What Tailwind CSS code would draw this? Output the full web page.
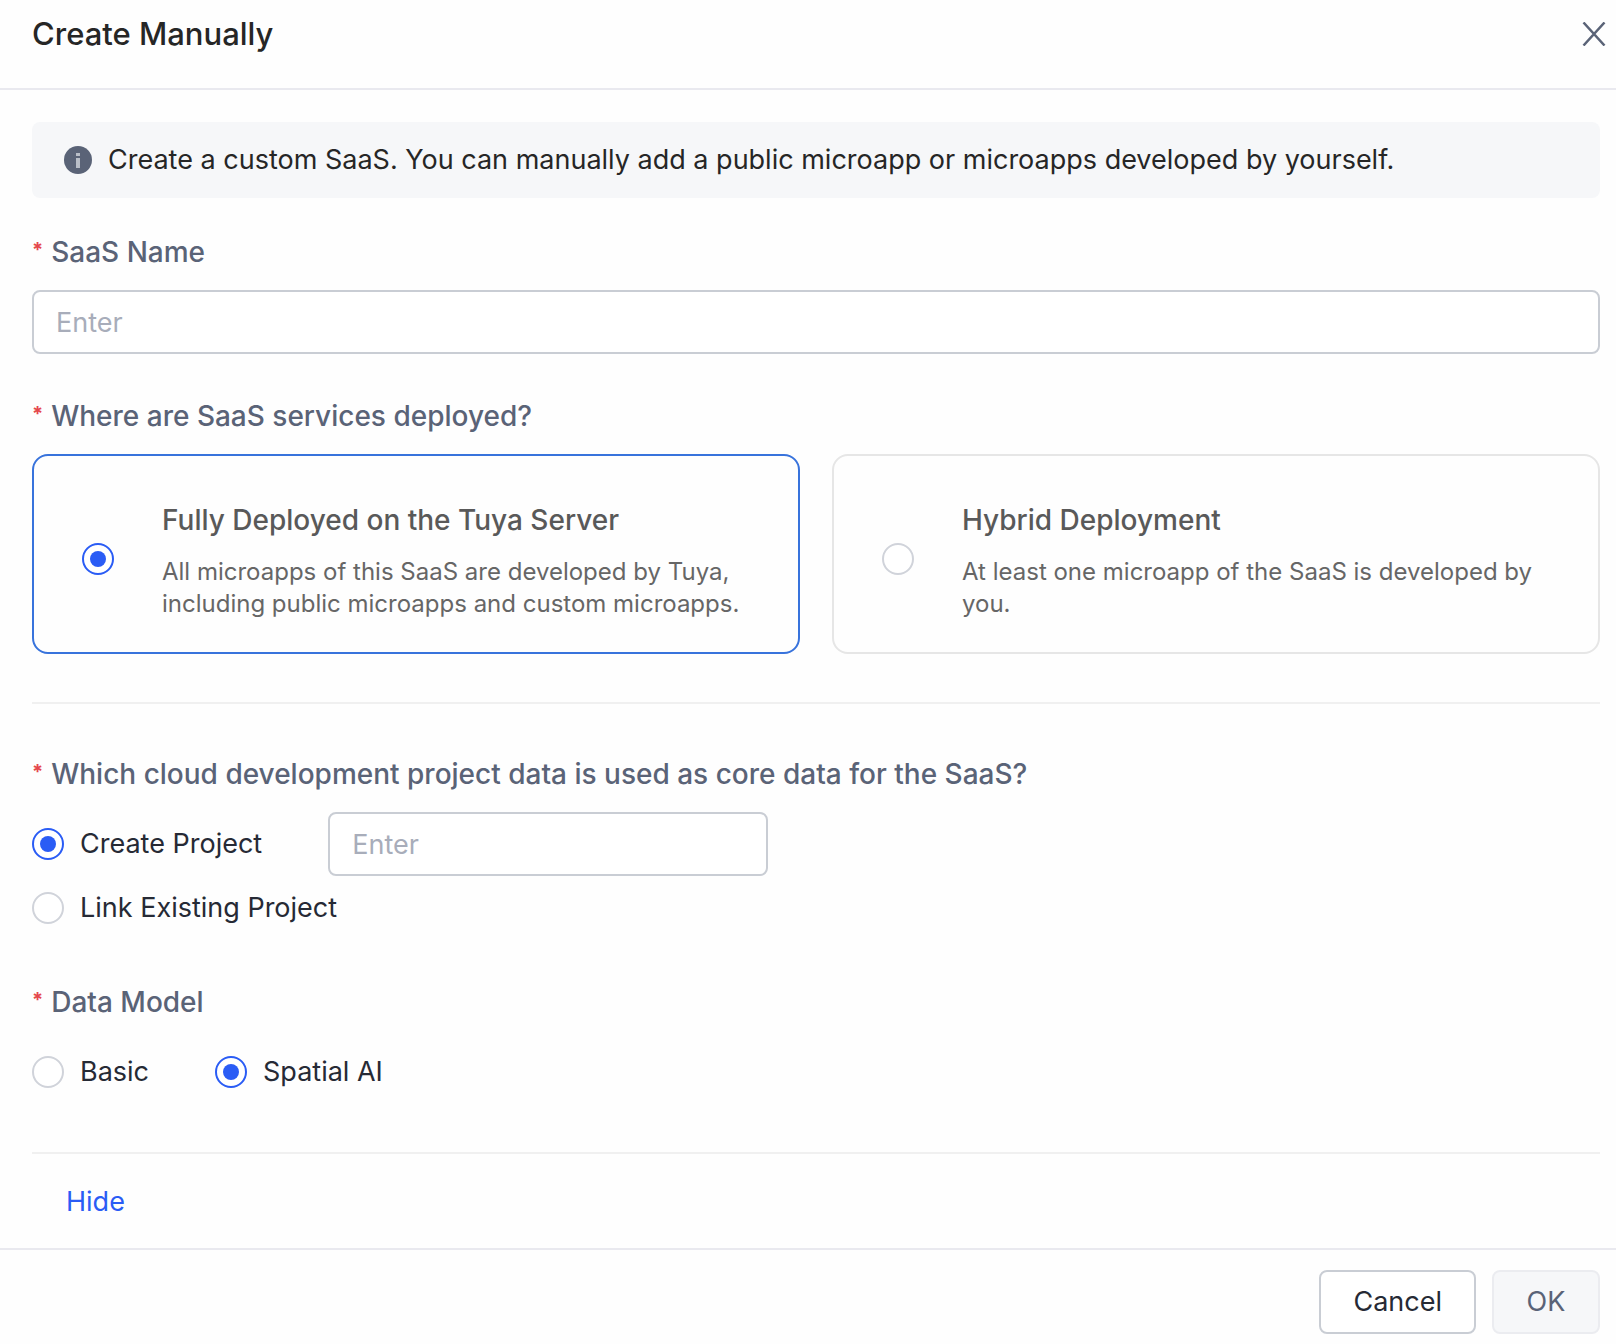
<!DOCTYPE html>
<html lang="en">
<head>
  <meta charset="UTF-8" />
  <meta name="viewport" content="width=device-width, initial-scale=1.0" />
  <title>Create Manually</title>
  <script src="https://cdn.jsdelivr.net/npm/@tailwindcss/browser@4"></script>
</head>
<body class="bg-[#fefefe] text-[#262a35] font-['Inter','Liberation_Sans',sans-serif] text-[27px] leading-[44px]">

  <form class="min-h-screen flex flex-col" onsubmit="return false">
    <!-- Header -->
    <header class="flex items-center justify-between pl-8 pr-2 pt-3 pb-8 border-b-2 border-[#e9e9ef]">
      <h1 class="text-[31px] font-medium text-[#262626]">Create Manually</h1>
      <button type="button" aria-label="Close" class="size-7 flex items-center justify-center text-[#5a6377]">
        <svg class="size-6" viewBox="0 0 24 24" fill="none" stroke="currentColor" stroke-width="2.5">
          <path d="M1.5 0.5L22.5 23.5M22.5 0.5L1.5 23.5" />
        </svg>
      </button>
    </header>

    <main class="pl-8 pr-4 pt-8">
      <!-- Info banner -->
      <div class="flex items-center gap-4 rounded-lg bg-[#f6f7f9] px-8 py-4 text-[#262626]">
        <svg class="size-7 shrink-0" viewBox="0 0 28 28" fill="none">
          <circle cx="14" cy="14" r="14" fill="#5a6377" />
          <rect x="12" y="7" width="4" height="3" fill="#b9bec8" />
          <rect x="12" y="12" width="4" height="10" fill="#b9bec8" />
        </svg>
        <p>Create a custom SaaS. You can manually add a public microapp or microapps developed by yourself.</p>
      </div>

      <!-- SaaS name -->
      <div class="mt-8">
        <label for="saasName" class="flex gap-2 text-[28px] font-medium text-[#5a6377]">
          <span class="text-[20px] leading-10 font-bold text-[#e5484d]">*</span>SaaS Name
        </label>
        <input id="saasName" type="text" placeholder="Enter" class="mt-4 block h-16 w-full rounded-lg border-2 border-[#c9cdd4] bg-white px-[22px] placeholder:text-[#a8adba]" />
      </div>

      <!-- Deployment -->
      <fieldset class="mt-10">
        <legend class="flex gap-2 text-[28px] font-medium text-[#5a6377]">
          <span class="text-[20px] leading-10 font-bold text-[#e5484d]">*</span>Where are SaaS services deployed?
        </legend>
        <div class="mt-4 grid grid-cols-2 gap-8">
          <label class="flex items-center gap-12 rounded-2xl border-2 border-[#e6e6e6] has-checked:border-[#3873dc] px-12 pt-[42px] pb-8">
            <input type="radio" name="deploy" checked class="appearance-none size-8 shrink-0 rounded-full border-2 border-[#d0d3da] bg-white flex items-center justify-center checked:border-[#2a5cf5] checked:before:size-4 checked:before:rounded-full checked:before:bg-[#2a5cf5]" />
            <span class="flex flex-col gap-[14px]">
              <span class="text-[28px] font-medium text-[#595959]">Fully Deployed on the Tuya Server</span>
              <span class="text-[24px] leading-8 text-[#666666]">All microapps of this SaaS are developed by Tuya, including public microapps and custom microapps.</span>
            </span>
          </label>
          <label class="flex items-center gap-12 rounded-2xl border-2 border-[#e6e6e6] has-checked:border-[#3873dc] px-12 pt-[42px] pb-8">
            <input type="radio" name="deploy" class="appearance-none size-8 shrink-0 rounded-full border-2 border-[#d0d3da] bg-white flex items-center justify-center checked:border-[#2a5cf5] checked:before:size-4 checked:before:rounded-full checked:before:bg-[#2a5cf5]" />
            <span class="flex flex-col gap-[14px]">
              <span class="text-[28px] font-medium text-[#595959]">Hybrid Deployment</span>
              <span class="text-[24px] leading-8 text-[#666666]">At least one microapp of the SaaS is developed by you.</span>
            </span>
          </label>
        </div>
      </fieldset>

      <hr class="my-12 border-t-2 border-[#f0f0f0]" />

      <!-- Project -->
      <fieldset>
        <legend class="flex gap-2 text-[28px] font-medium text-[#5a6377]">
          <span class="text-[20px] leading-10 font-bold text-[#e5484d]">*</span>Which cloud development project data is used as core data for the SaaS?
        </legend>
        <div class="mt-4 flex items-center gap-[66px]">
          <label class="flex items-center gap-4">
            <input type="radio" name="project" checked class="appearance-none size-8 shrink-0 rounded-full border-2 border-[#d0d3da] bg-white flex items-center justify-center checked:border-[#2a5cf5] checked:before:size-4 checked:before:rounded-full checked:before:bg-[#2a5cf5]" />
            Create Project
          </label>
          <input type="text" aria-label="Project name" placeholder="Enter" class="h-16 w-[440px] rounded-lg border-2 border-[#c9cdd4] bg-white px-[22px] placeholder:text-[#a8adba]" />
        </div>
        <div class="flex h-16 items-center">
          <label class="flex items-center gap-4">
            <input type="radio" name="project" class="appearance-none size-8 shrink-0 rounded-full border-2 border-[#d0d3da] bg-white flex items-center justify-center checked:border-[#2a5cf5] checked:before:size-4 checked:before:rounded-full checked:before:bg-[#2a5cf5]" />
            Link Existing Project
          </label>
        </div>
      </fieldset>

      <!-- Data model -->
      <fieldset class="mt-10">
        <legend class="flex gap-2 text-[28px] font-medium text-[#5a6377]">
          <span class="text-[20px] leading-10 font-bold text-[#e5484d]">*</span>Data Model
        </legend>
        <div class="mt-4 flex h-16 items-center gap-[66px]">
          <label class="flex items-center gap-4">
            <input type="radio" name="model" class="appearance-none size-8 shrink-0 rounded-full border-2 border-[#d0d3da] bg-white flex items-center justify-center checked:border-[#2a5cf5] checked:before:size-4 checked:before:rounded-full checked:before:bg-[#2a5cf5]" />
            Basic
          </label>
          <label class="flex items-center gap-4">
            <input type="radio" name="model" checked class="appearance-none size-8 shrink-0 rounded-full border-2 border-[#d0d3da] bg-white flex items-center justify-center checked:border-[#2a5cf5] checked:before:size-4 checked:before:rounded-full checked:before:bg-[#2a5cf5]" />
            Spatial AI
          </label>
        </div>
      </fieldset>

      <hr class="mt-12 border-t-2 border-[#f0f0f0]" />

      <div class="px-[34px] pt-[26px] pb-6 flex">
        <button type="button" class="text-[#2a5cf5]">Hide</button>
      </div>
    </main>

    <!-- Footer -->
    <footer class="flex justify-end gap-4 border-t-2 border-[#e9e9ef] px-4 pt-5 pb-2">
      <button type="button" class="h-16 rounded-lg border-2 border-[#c9cdd4] bg-white px-8">Cancel</button>
      <button type="submit" disabled class="h-16 min-w-[108px] rounded-lg border-2 border-[#ebecf0] bg-[#f6f7f9] text-[#5a6377]">OK</button>
    </footer>
  </form>
</body>
</html>
